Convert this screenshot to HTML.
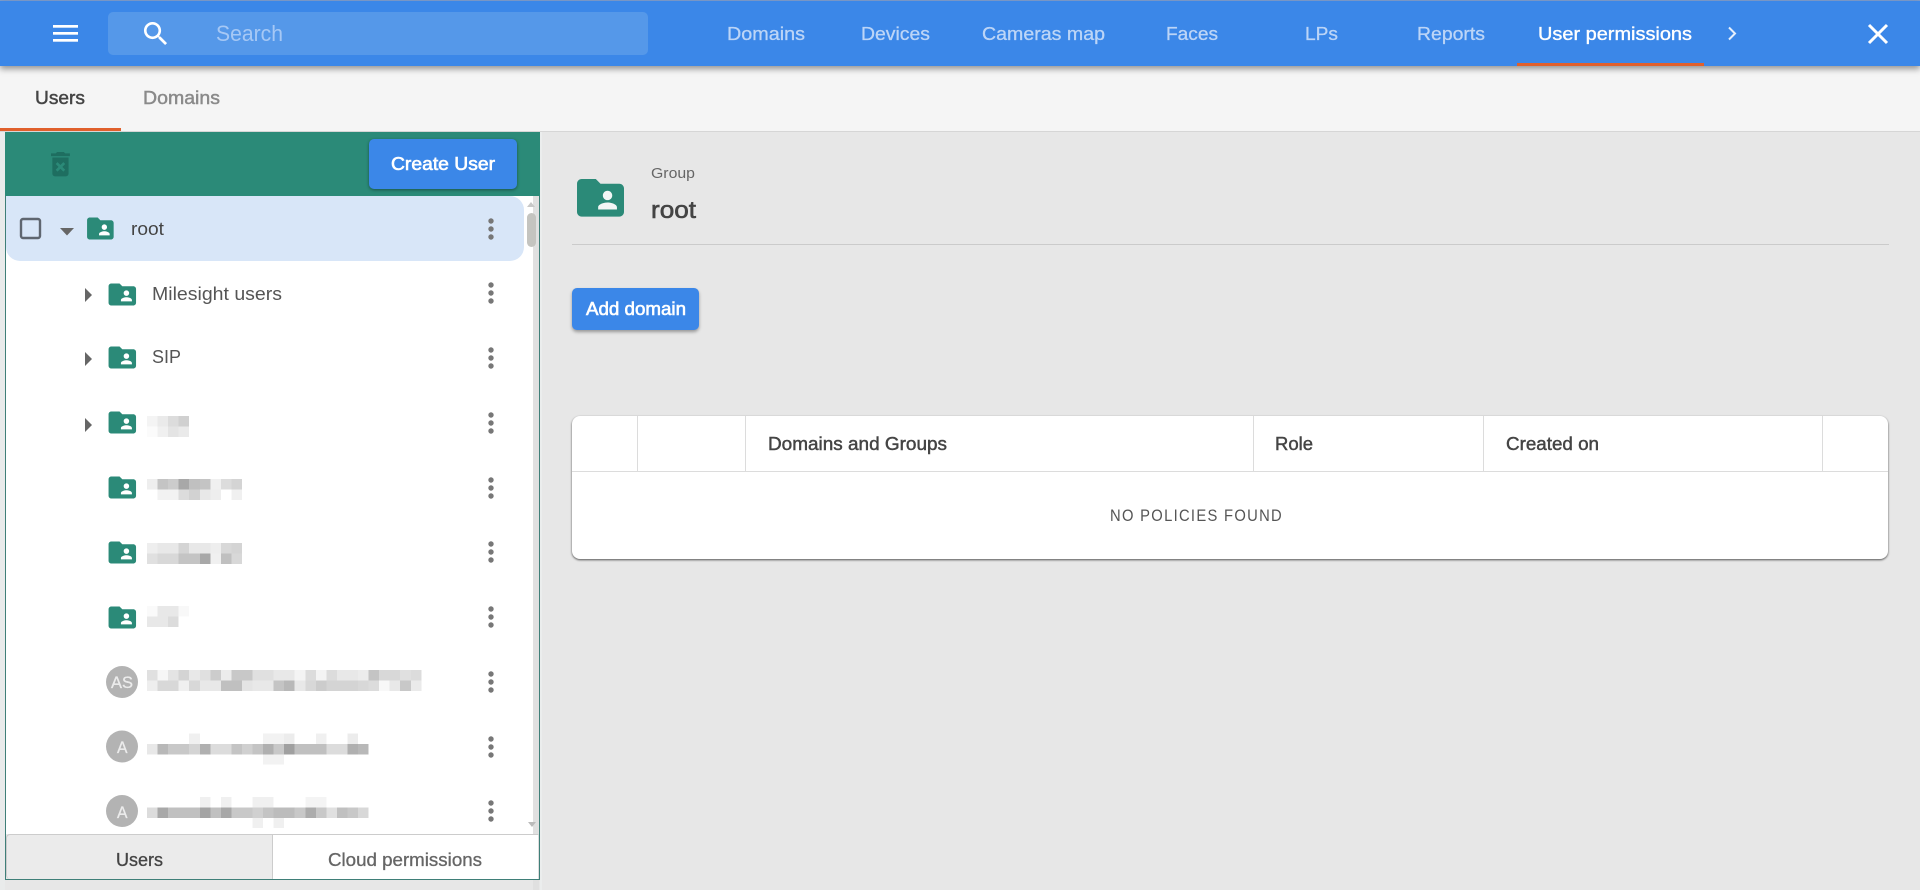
<!DOCTYPE html>
<html lang="en">
<head>
<meta charset="utf-8">
<title>User permissions</title>
<style>
html,body{margin:0;padding:0;width:1920px;height:890px;overflow:hidden;background:#e7e7e7;font-family:"Liberation Sans",sans-serif}
div{position:absolute;box-sizing:border-box}
#overlay{position:absolute;left:0;top:0;width:1920px;height:890px}
#overlay text{font-family:"Liberation Sans",sans-serif}
.m{stroke-width:.35px}
</style>
</head>
<body>
<!-- left edge -->
<div style="left:0;top:131px;width:5px;height:759px;background:#e9ebeb"></div>
<div style="left:540px;top:132px;width:2px;height:758px;background:#ebeded"></div>
<!-- subnav -->
<div style="left:0;top:66px;width:1920px;height:66px;background:#f5f5f5;border-bottom:1px solid #d6d6d6"></div>
<div style="left:0;top:128px;width:121px;height:3px;background:#e0602c"></div>
<!-- topbar -->
<div style="left:0;top:0;width:1920px;height:1px;background:#7f9fd0"></div>
<div style="left:0;top:1px;width:1920px;height:65px;background:#3b87e8;box-shadow:0 3px 6px rgba(0,0,0,.4)"></div>
<div style="left:108px;top:12px;width:540px;height:43px;background:#5598e9;border-radius:5px"></div>
<div style="left:1517px;top:63px;width:187px;height:3px;background:#e0602c"></div>
<!-- left panel -->
<div style="left:5px;top:132px;width:535px;height:64px;background:#2b8a78"></div>
<div style="left:5px;top:196px;width:1px;height:684px;background:#3f7f78"></div>
<div style="left:6px;top:196px;width:527px;height:638px;background:#fff"></div>
<div style="left:533px;top:196px;width:6px;height:694px;background:#e0e0e0"></div>
<div style="left:539px;top:196px;width:1px;height:684px;background:#3f7f78"></div>
<div style="left:527px;top:196px;width:6px;height:638px;background:#fff"></div>
<div style="left:527px;top:213px;width:9px;height:34px;background:#c4c4c0;border-radius:5px"></div>
<div style="left:6px;top:196px;width:518px;height:65px;background:#d8e6f8;border-radius:0 14px 14px 14px"></div>
<div style="left:369px;top:139px;width:148px;height:50px;background:#3b87e8;border-radius:5px;box-shadow:0 1px 3px rgba(0,0,0,.4)"></div>
<!-- bottom tabs -->
<div style="left:6px;top:834px;width:266px;height:45px;background:#ebebeb;border-top:1px solid #ccc;border-left:1px solid #ccc;border-radius:4px 0 0 4px"></div>
<div style="left:272px;top:834px;width:267px;height:45px;background:#fff;border-top:1px solid #ccc;border-left:1px solid #ccc;border-right:1px solid #ddd"></div>
<div style="left:5px;top:879px;width:535px;height:1px;background:#3f7f78"></div>
<!-- main -->
<div style="left:572px;top:244px;width:1317px;height:1px;background:#cbcbcb"></div>
<div style="left:572px;top:288px;width:127px;height:42px;background:#3b87e8;border-radius:5px;box-shadow:0 2px 3px rgba(0,0,0,.35)"></div>
<div style="left:572px;top:416px;width:1316px;height:143px;background:#fff;border-radius:8px;box-shadow:0 1px 2px rgba(0,0,0,.65)"></div>
<div style="left:572px;top:471px;width:1316px;height:1px;background:#dcdcdc"></div>
<div style="left:637px;top:416px;width:1px;height:55px;background:#dcdcdc"></div>
<div style="left:745px;top:416px;width:1px;height:55px;background:#dcdcdc"></div>
<div style="left:1253px;top:416px;width:1px;height:55px;background:#dcdcdc"></div>
<div style="left:1483px;top:416px;width:1px;height:55px;background:#dcdcdc"></div>
<div style="left:1822px;top:416px;width:1px;height:55px;background:#dcdcdc"></div>

<svg id="overlay" viewBox="0 0 1920 890" xmlns="http://www.w3.org/2000/svg">
<defs>
<path id="fs" d="M20 6h-8l-2-2H4c-1.1 0-1.99.9-1.99 2L2 18c0 1.1.9 2 2 2h16c1.1 0 2-.9 2-2V8c0-1.1-.9-2-2-2zm-5 3c1.1 0 2 .9 2 2s-.9 2-2 2-2-.9-2-2 .9-2 2-2zm4 8h-8v-1c0-1.33 2.67-2 4-2s4 .67 4 2v1z" fill="#2b8a78"/>
<g id="kb" fill="#777"><circle cx="0" cy="-8" r="2.7"/><circle cx="0" cy="0" r="2.7"/><circle cx="0" cy="8" r="2.7"/></g>
</defs>

<!-- topbar -->
<g fill="#fff"><rect x="53" y="25" width="25" height="2.7"/><rect x="53" y="32" width="25" height="2.7"/><rect x="53" y="39" width="25" height="2.7"/></g>
<path transform="translate(140,18) scale(1.32)" fill="#fff" d="M15.5 14h-.79l-.28-.27C15.41 12.59 16 11.11 16 9.5 16 5.91 13.09 3 9.5 3S3 5.91 3 9.5 5.91 16 9.5 16c1.61 0 3.09-.59 4.23-1.57l.27.28v.79l5 4.99L20.49 19l-4.99-5zm-6 0C7.01 14 5 11.99 5 9.5S7.01 5 9.5 5 14 7.01 14 9.5 11.99 14 9.5 14z"/>
<text x="216" y="41" font-size="22" fill="#a6c8f5" textLength="67" lengthAdjust="spacingAndGlyphs">Search</text>
<g font-size="18" fill="#bcd5f7" stroke="#bcd5f7" stroke-width=".3">
<text x="727" y="40" textLength="78" lengthAdjust="spacingAndGlyphs">Domains</text>
<text x="861" y="40" textLength="69" lengthAdjust="spacingAndGlyphs">Devices</text>
<text x="982" y="40" textLength="123" lengthAdjust="spacingAndGlyphs">Cameras map</text>
<text x="1166" y="40" textLength="52" lengthAdjust="spacingAndGlyphs">Faces</text>
<text x="1305" y="40" textLength="33" lengthAdjust="spacingAndGlyphs">LPs</text>
<text x="1417" y="40" textLength="68" lengthAdjust="spacingAndGlyphs">Reports</text>
</g>
<text x="1538" y="40" font-size="18" fill="#fff" stroke="#fff" class="m" textLength="154" lengthAdjust="spacingAndGlyphs">User permissions</text>
<path d="M1729 27.5l6 6-6 6" fill="none" stroke="#e6effc" stroke-width="2"/>
<path d="M1869 25l18 18M1887 25l-18 18" fill="none" stroke="#fff" stroke-width="3"/>

<!-- subnav -->
<text x="35" y="104" font-size="18" fill="#444" stroke="#444" stroke-width=".45" textLength="50" lengthAdjust="spacingAndGlyphs">Users</text>
<text x="143" y="104" font-size="18" fill="#8a8a8a" stroke="#8a8a8a" stroke-width=".45" textLength="77" lengthAdjust="spacingAndGlyphs">Domains</text>

<!-- panel header -->
<path transform="translate(44.25,148) scale(1.35)" fill="#1e6e60" d="M6 19c0 1.1.9 2 2 2h8c1.1 0 2-.9 2-2V7H6v12zm2.46-7.12l1.41-1.41L12 12.59l2.12-2.12 1.41 1.41L13.41 14l2.12 2.12-1.41 1.41L12 15.41l-2.12 2.12-1.41-1.41L10.59 14l-2.13-2.12zM15.5 4l-1-1h-5l-1 1H5v2h14V4z"/>
<text x="391" y="170" font-size="18" fill="#fff" stroke="#fff" stroke-width=".6" textLength="104" lengthAdjust="spacingAndGlyphs">Create User</text>

<!-- scroll arrows -->
<path d="M527 207l4-5 4 5z" fill="#c8c8c8"/>
<path d="M528 822h8l-4 5z" fill="#bbb"/>

<!-- tree -->
<rect x="21" y="219" width="19" height="19" rx="2" fill="none" stroke="#5f6670" stroke-width="2.4"/>
<path d="M60 228h14l-7 7.5z" fill="#666"/>
<rect x="97" y="221" width="15" height="16" fill="#fff"/>
<use href="#fs" transform="translate(84.4,212) scale(1.33,1.375)"/>
<text x="131" y="235" font-size="18" fill="#444" textLength="33" lengthAdjust="spacingAndGlyphs">root</text>
<use href="#kb" x="491" y="229" style="fill:#666c75"/>

<path d="M85 288l7 7-7 7z" fill="#666"/>
<use href="#fs" transform="translate(105.8,278) scale(1.375)"/>
<text x="152" y="300" font-size="18" fill="#555" textLength="130" lengthAdjust="spacingAndGlyphs">Milesight users</text>
<use href="#kb" x="491" y="293"/>

<path d="M85 352l7 7-7 7z" fill="#666"/>
<use href="#fs" transform="translate(105.8,341) scale(1.375)"/>
<text x="152" y="363" font-size="18" fill="#555" textLength="29" lengthAdjust="spacingAndGlyphs">SIP</text>
<use href="#kb" x="491" y="358"/>

<path d="M85 418l7 7-7 7z" fill="#666"/>
<use href="#fs" transform="translate(105.8,406) scale(1.375)"/>
<use href="#kb" x="491" y="423"/>
<use href="#fs" transform="translate(105.8,471) scale(1.375)"/>
<use href="#kb" x="491" y="488"/>
<use href="#fs" transform="translate(105.8,536) scale(1.375)"/>
<use href="#kb" x="491" y="552"/>
<use href="#fs" transform="translate(105.8,601) scale(1.375)"/>
<use href="#kb" x="491" y="617"/>

<circle cx="122" cy="682" r="16" fill="#b3b3b3"/>
<text x="111" y="688" font-size="17" fill="#ececec" stroke="#ececec" stroke-width=".3" textLength="22" lengthAdjust="spacingAndGlyphs">AS</text>
<use href="#kb" x="491" y="682"/>
<circle cx="122" cy="746.5" r="16" fill="#b3b3b3"/>
<text x="117" y="753" font-size="17" fill="#ececec" stroke="#ececec" stroke-width=".3" textLength="10.5" lengthAdjust="spacingAndGlyphs">A</text>
<use href="#kb" x="491" y="747"/>
<circle cx="122" cy="811" r="16" fill="#b3b3b3"/>
<text x="117" y="818" font-size="17" fill="#ececec" stroke="#ececec" stroke-width=".3" textLength="10.5" lengthAdjust="spacingAndGlyphs">A</text>
<use href="#kb" x="491" y="811"/>

<!-- pixelated names -->
<g shape-rendering="crispEdges">
<g transform="translate(147,416) scale(10.55,10.4)">
<rect x="0" y="0" width="1" height="1" fill="#f4f4f4"/><rect x="1" y="0" width="1" height="1" fill="#eaeaea"/><rect x="2" y="0" width="1" height="1" fill="#dcdcdc"/><rect x="3" y="0" width="1" height="1" fill="#d0d0d0"/>
<rect x="0" y="1" width="1" height="1" fill="#fbfbfb"/><rect x="1" y="1" width="1" height="1" fill="#f0f0f0"/><rect x="2" y="1" width="1" height="1" fill="#e4e4e4"/><rect x="3" y="1" width="1" height="1" fill="#eaeaea"/>
</g>
<g transform="translate(147,479) scale(10.55,10.4)">
<rect x="0" y="0" width="1" height="1" fill="#eeeeee"/><rect x="1" y="0" width="1" height="1" fill="#c4c4c4"/><rect x="2" y="0" width="1" height="1" fill="#cccccc"/><rect x="3" y="0" width="1" height="1" fill="#a8a8a8"/><rect x="4" y="0" width="1" height="1" fill="#c0c0c0"/><rect x="5" y="0" width="1" height="1" fill="#c4c4c4"/><rect x="6" y="0" width="1" height="1" fill="#f0f0f0"/><rect x="7" y="0" width="1" height="1" fill="#dcdcdc"/><rect x="8" y="0" width="1" height="1" fill="#d4d4d4"/>
<rect x="1" y="1" width="2" height="1" fill="#f2f2f2"/><rect x="3" y="1" width="1" height="1" fill="#dcdcdc"/><rect x="4" y="1" width="1" height="1" fill="#d2d2d2"/><rect x="5" y="1" width="1" height="1" fill="#e8e8e8"/><rect x="6" y="1" width="1" height="1" fill="#eeeeee"/><rect x="8" y="1" width="1" height="1" fill="#f0f0f0"/>
</g>
<g transform="translate(147,543) scale(10.55,10.4)">
<rect x="0" y="0" width="1" height="1" fill="#eeeeee"/><rect x="1" y="0" width="2" height="1" fill="#e8e8e8"/><rect x="3" y="0" width="1" height="1" fill="#d4d4d4"/><rect x="4" y="0" width="2" height="1" fill="#e8e8e8"/><rect x="6" y="0" width="1" height="1" fill="#eeeeee"/><rect x="7" y="0" width="1" height="1" fill="#d8d8d8"/><rect x="8" y="0" width="1" height="1" fill="#d4d4d4"/>
<rect x="0" y="1" width="1" height="1" fill="#e0e0e0"/><rect x="1" y="1" width="2" height="1" fill="#d8d8d8"/><rect x="3" y="1" width="2" height="1" fill="#c4c4c4"/><rect x="5" y="1" width="1" height="1" fill="#a8a8a8"/><rect x="6" y="1" width="1" height="1" fill="#f0f0f0"/><rect x="7" y="1" width="1" height="1" fill="#c0c0c0"/><rect x="8" y="1" width="1" height="1" fill="#d8d8d8"/>
</g>
<g transform="translate(147,606) scale(10.55,10.4)">
<rect x="0" y="0" width="1" height="1" fill="#fafafa"/><rect x="1" y="0" width="2" height="1" fill="#e8e8e8"/><rect x="3" y="0" width="1" height="1" fill="#f8f8f8"/>
<rect x="0" y="1" width="2" height="1" fill="#e8e8e8"/><rect x="2" y="1" width="1" height="1" fill="#dcdcdc"/>
</g>
<g transform="translate(147,670) scale(10.55,10.4)">
<rect x="0" y="0" width="1" height="1" fill="#e0e0e0"/><rect x="1" y="0" width="1" height="1" fill="#f6f6f6"/><rect x="2" y="0" width="1" height="1" fill="#e4e4e4"/><rect x="3" y="0" width="1" height="1" fill="#d4d4d4"/><rect x="4" y="0" width="1" height="1" fill="#e8e8e8"/><rect x="5" y="0" width="1" height="1" fill="#e0e0e0"/><rect x="6" y="0" width="1" height="1" fill="#cccccc"/><rect x="7" y="0" width="1" height="1" fill="#ececec"/><rect x="8" y="0" width="2" height="1" fill="#c8c8c8"/><rect x="10" y="0" width="2" height="1" fill="#e0e0e0"/><rect x="12" y="0" width="2" height="1" fill="#e8e8e8"/><rect x="14" y="0" width="1" height="1" fill="#f4f4f4"/><rect x="15" y="0" width="1" height="1" fill="#dcdcdc"/><rect x="16" y="0" width="1" height="1" fill="#f4f4f4"/><rect x="17" y="0" width="1" height="1" fill="#dcdcdc"/><rect x="18" y="0" width="2" height="1" fill="#e8e8e8"/><rect x="20" y="0" width="1" height="1" fill="#ececec"/><rect x="21" y="0" width="1" height="1" fill="#c4c4c4"/><rect x="22" y="0" width="2" height="1" fill="#d8d8d8"/><rect x="24" y="0" width="1" height="1" fill="#e0e0e0"/><rect x="25" y="0" width="1" height="1" fill="#dcdcdc"/>
<rect x="0" y="1" width="1" height="1" fill="#eeeeee"/><rect x="1" y="1" width="2" height="1" fill="#d8d8d8"/><rect x="3" y="1" width="1" height="1" fill="#f0f0f0"/><rect x="4" y="1" width="1" height="1" fill="#d8d8d8"/><rect x="5" y="1" width="2" height="1" fill="#e8e8e8"/><rect x="7" y="1" width="2" height="1" fill="#c0c0c0"/><rect x="9" y="1" width="1" height="1" fill="#e4e4e4"/><rect x="10" y="1" width="2" height="1" fill="#e8e8e8"/><rect x="12" y="1" width="1" height="1" fill="#c4c4c4"/><rect x="13" y="1" width="1" height="1" fill="#b8b8b8"/><rect x="14" y="1" width="1" height="1" fill="#e8e8e8"/><rect x="15" y="1" width="1" height="1" fill="#d8d8d8"/><rect x="16" y="1" width="1" height="1" fill="#cccccc"/><rect x="17" y="1" width="3" height="1" fill="#d4d4d4"/><rect x="20" y="1" width="1" height="1" fill="#d8d8d8"/><rect x="21" y="1" width="1" height="1" fill="#dcdcdc"/><rect x="22" y="1" width="1" height="1" fill="#f8f8f8"/><rect x="23" y="1" width="1" height="1" fill="#e8e8e8"/><rect x="24" y="1" width="1" height="1" fill="#c8c8c8"/><rect x="25" y="1" width="1" height="1" fill="#eaeaea"/>
</g>
<g transform="translate(147,733.5) scale(10.55,10.4)">
<rect x="4" y="0" width="1" height="1" fill="#f0f0f0"/><rect x="11" y="0" width="2" height="1" fill="#f2f2f2"/><rect x="13" y="0" width="1" height="1" fill="#ececec"/><rect x="16" y="0" width="1" height="1" fill="#f0f0f0"/><rect x="19" y="0" width="1" height="1" fill="#ececec"/>
<rect x="0" y="1" width="1" height="1" fill="#e8e8e8"/><rect x="1" y="1" width="1" height="1" fill="#b8b8b8"/><rect x="2" y="1" width="2" height="1" fill="#c8c8c8"/><rect x="4" y="1" width="1" height="1" fill="#d4d4d4"/><rect x="5" y="1" width="1" height="1" fill="#b0b0b0"/><rect x="6" y="1" width="2" height="1" fill="#dcdcdc"/><rect x="8" y="1" width="1" height="1" fill="#c4c4c4"/><rect x="9" y="1" width="1" height="1" fill="#d0d0d0"/><rect x="10" y="1" width="1" height="1" fill="#c4c4c4"/><rect x="11" y="1" width="1" height="1" fill="#b0b0b0"/><rect x="12" y="1" width="1" height="1" fill="#c8c8c8"/><rect x="13" y="1" width="1" height="1" fill="#a0a0a0"/><rect x="14" y="1" width="3" height="1" fill="#c0c0c0"/><rect x="17" y="1" width="2" height="1" fill="#dcdcdc"/><rect x="19" y="1" width="1" height="1" fill="#b0b0b0"/><rect x="20" y="1" width="1" height="1" fill="#b8b8b8"/>
<rect x="11" y="2" width="2" height="1" fill="#f2f2f2"/>
</g>
<g transform="translate(147,797) scale(10.55,10.4)">
<rect x="5" y="0" width="1" height="1" fill="#f0f0f0"/><rect x="7" y="0" width="1" height="1" fill="#f0f0f0"/><rect x="10" y="0" width="2" height="1" fill="#f0f0f0"/><rect x="15" y="0" width="2" height="1" fill="#f4f4f4"/>
<rect x="0" y="1" width="1" height="1" fill="#dcdcdc"/><rect x="1" y="1" width="1" height="1" fill="#a8a8a8"/><rect x="2" y="1" width="3" height="1" fill="#c0c0c0"/><rect x="5" y="1" width="1" height="1" fill="#a4a4a4"/><rect x="6" y="1" width="1" height="1" fill="#c0c0c0"/><rect x="7" y="1" width="1" height="1" fill="#a8a8a8"/><rect x="8" y="1" width="2" height="1" fill="#c8c8c8"/><rect x="10" y="1" width="1" height="1" fill="#d0d0d0"/><rect x="11" y="1" width="1" height="1" fill="#c4c4c4"/><rect x="12" y="1" width="2" height="1" fill="#bcbcbc"/><rect x="14" y="1" width="1" height="1" fill="#c8c8c8"/><rect x="15" y="1" width="1" height="1" fill="#acacac"/><rect x="16" y="1" width="1" height="1" fill="#c8c8c8"/><rect x="17" y="1" width="1" height="1" fill="#e0e0e0"/><rect x="18" y="1" width="1" height="1" fill="#c0c0c0"/><rect x="19" y="1" width="1" height="1" fill="#c8c8c8"/><rect x="20" y="1" width="1" height="1" fill="#d8d8d8"/>
<rect x="10" y="2" width="1" height="1" fill="#f0f0f0"/><rect x="12" y="2" width="1" height="1" fill="#f0f0f0"/>
</g>
</g>

<!-- bottom tabs -->
<text x="116" y="866" font-size="18" fill="#444" stroke="#444" stroke-width=".3" textLength="47" lengthAdjust="spacingAndGlyphs">Users</text>
<text x="328" y="866" font-size="18" fill="#666" stroke="#666" stroke-width=".3" textLength="154" lengthAdjust="spacingAndGlyphs">Cloud permissions</text>

<!-- main -->
<rect x="595" y="189" width="25" height="23" fill="#f2f6f5"/>
<use href="#fs" transform="translate(572.3,169.6) scale(2.35)"/>
<text x="651" y="178" font-size="15" fill="#666" textLength="44" lengthAdjust="spacingAndGlyphs">Group</text>
<text x="651" y="218" font-size="24" fill="#444" stroke="#444" stroke-width=".6" textLength="45" lengthAdjust="spacingAndGlyphs">root</text>
<text x="586" y="315" font-size="18" fill="#fff" stroke="#fff" stroke-width=".6" textLength="100" lengthAdjust="spacingAndGlyphs">Add domain</text>
<g font-size="18" fill="#444" stroke="#444" stroke-width=".45">
<text x="768" y="450" textLength="179" lengthAdjust="spacingAndGlyphs">Domains and Groups</text>
<text x="1275" y="450" textLength="38" lengthAdjust="spacingAndGlyphs">Role</text>
<text x="1506" y="450" textLength="93" lengthAdjust="spacingAndGlyphs">Created on</text>
</g>
<text x="1110" y="521" font-size="17" fill="#555" letter-spacing="1.5" textLength="173" lengthAdjust="spacingAndGlyphs">NO POLICIES FOUND</text>
</svg>
</body>
</html>
